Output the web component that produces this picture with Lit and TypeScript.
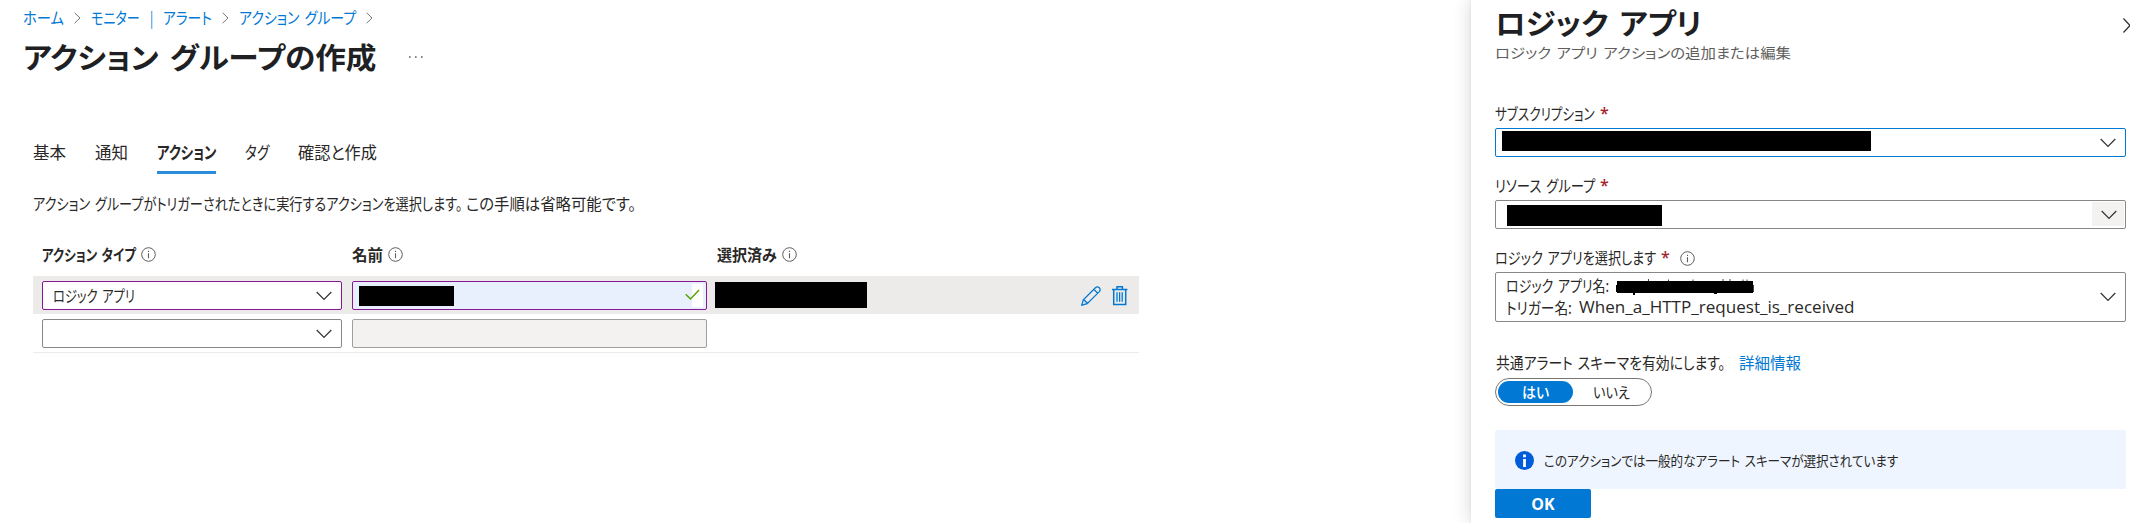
import { LitElement, html, css, svg } from "lit";
import { customElement, property, query } from "lit/decorators.js";

/** A single line of text condensed or widened to a given width. */
@customElement("fit-text")
class FitText extends LitElement {
  static styles = css`
    :host { display: inline-block; white-space: nowrap; flex: none; }
    .run { display: inline-block; transform-origin: 0 50%; font-feature-settings: "palt"; word-spacing: 0.14em; }
  `;
  @property() text = "";
  @property({ type: Number }) w = 0;
  @query(".run") run!: HTMLElement;
  render() {
    return html`<span class="run">${this.text}</span>`;
  }
  updated() {
    this.style.width = `${this.w}px`;
    const natural = this.run.offsetWidth;
    if (natural) this.run.style.transform = `scaleX(${this.w / natural})`;
  }
}

const t = (text: string, w: number) => html`<fit-text .text=${text} .w=${w}></fit-text>`;

const sep = html`<svg class="sep" width="7" height="12" viewBox="0 0 7 12"><path d="M.6.8 6 6 .6 11.2" fill="none" stroke="#797775" /></svg>`;
const chevron = html`<svg class="chev" width="16" height="10" viewBox="0 0 16 10"><path d="M.7 1 8 8.3 15.3 1" fill="none" stroke="#323130" stroke-width="1.2" /></svg>`;
const info = html`<svg class="info" width="15" height="15" viewBox="0 0 15 15"><circle cx="7.5" cy="7.5" r="6.8" fill="none" stroke="#605e5c" /><path d="M7.5 6.3v5M7.5 3.7v1.3" stroke="#605e5c" stroke-width="1.1" /></svg>`;
const bars = [0, 1, 2].map((i) => svg`<path d=${`M${5 + i * 2.6} 6.2v9.6`} stroke-width="1.3" />`);

@customElement("app-root")
class AppRoot extends LitElement {
  static styles = css`
    :host {
      display: block; width: 2130px; height: 523px; overflow: hidden; background: #fff; color: #292827;
      font-family: "Noto Sans CJK JP", "Open Sans", sans-serif; font-size: 16px;
    }
    * { box-sizing: border-box; }
    svg { display: block; flex: none; }
    .page { display: grid; grid-template-columns: 1471px 659px; height: 523px; }
    .crumbs { display: flex; align-items: center; height: 36px; padding-left: 23px; gap: 10px; color: #0078d4; line-height: 34px; }
    .crumbs fit-text { height: 36px; }
    .title { display: flex; align-items: center; height: 42px; padding-left: 23px; gap: 33px; font-size: 29px; font-weight: 700; line-height: 40px; color: #201f24; }
    .title fit-text { height: 42px; }
    .tabs { display: flex; gap: 29px; margin: 52px 0 0 33px; height: 44px; font-size: 17px; }
    .tab { padding-top: 2px; line-height: 40px; border-bottom: 3px solid transparent; }
    .tab.on { font-weight: 700; border-color: #2b8cdb; }
    .desc { display: flex; gap: 4px; margin: 15px 0 0 33px; height: 30px; line-height: 28px; }
    .table { margin: 17px 0 0 33px; width: 1106px; }
    .head, .row { display: grid; grid-template-columns: 300px 355px 1fr auto; column-gap: 10px; padding-left: 9px; }
    .head { height: 40px; font-weight: 700; font-size: 15.5px; line-height: 36px; }
    .head div { display: flex; gap: 5px; height: 36px; align-items: center; }
    .row { height: 38px; padding-top: 5px; }
    .row.sel { background: #edebe9; }
    .row.last { height: 39px; border-bottom: 1px solid #edebe9; }
    .box { display: flex; align-items: center; height: 29px; border: 1px solid #8a8886; border-radius: 2px; background: #fff; }
    .box .chev { margin-left: auto; margin-right: 9px; }
    .box.edited { border-color: #881798; }
    .pick { padding-left: 10px; line-height: 27px; }
    .name { padding: 2px 3px 2px 6px; background: #e8f0fe; justify-content: space-between; }
    .off { background: #f3f2f1; border-color: #a19f9d; }
    .black { background: #000; flex: none; }
    .b1 { width: 95px; height: 20px; margin-top: 1px; }
    .b2 { width: 152px; height: 26px; margin: 1px 0 0 -2px; }
    .b3 { width: 369px; height: 20px; margin: -3px 0 0 6px; }
    .b4 { width: 155px; height: 21px; margin: 2px 0 0 11px; }
    .valid { width: 18px; height: 23px; background: linear-gradient(90deg, transparent 7px, #fff 7px); }
    .acts { display: flex; gap: 11px; padding: 5px 11px 0 0; }
    .panel { position: relative; padding-left: 24px; background: #fff; box-shadow: 0 0 18px rgba(0,0,0,.16), 0 0 3px rgba(0,0,0,.08); }
    .ptitle { height: 43px; line-height: 44px; font-size: 29px; font-weight: 700; color: #201f24; }
    .sub { height: 20px; line-height: 18px; font-size: 14px; color: #605e5c; }
    .close { position: absolute; left: 652px; top: 18px; }
    .field { width: 631px; margin-top: 17px; }
    .field.first { margin-top: 39px; }
    .label { display: flex; height: 26px; line-height: 22px; gap: 5px; }
    .star { width: 8px; color: #a4262c; font-family: "Open Sans", sans-serif; font-size: 16px; font-weight: 600; }
    .label .info { margin: 5px 0 0 6px; }
    .focus { border-color: #0078d4; }
    .drop { display: flex; align-items: center; margin: -1px 1px 0 auto; width: 32px; height: 24px; background: #f3f2f1; }
    .box .drop .chev { margin: 1px 7px 0 auto; }
    .tall { height: 50px; padding-left: 10px; }
    .lines { line-height: 22px; margin-top: -2px; }
    .line { display: flex; height: 22px; gap: 7px; }
    .line svg { margin-top: 1px; }
    .latin { font-family: "Open Sans", sans-serif; font-size: 16px; }
    .schema { display: flex; gap: 14px; margin-top: 29px; height: 27px; line-height: 22px; padding-left: 1px; }
    .link { color: #0078d4; }
    .toggle { display: flex; width: 157px; height: 28px; padding: 2px; border: 1px solid #797775; border-radius: 14px; font-size: 15px; line-height: 21px; }
    .yes { width: 75px; height: 22px; border-radius: 11px; background: #0078d4; color: #fff; font-weight: 500; text-align: center; }
    .no { padding-left: 20px; }
    .banner { display: flex; align-items: center; gap: 10px; width: 631px; height: 59px; margin-top: 24px; padding: 1px 0 0 20px; background: #eff5ff; border-radius: 2px; font-size: 14px; }
    .ok { display: block; width: 96px; height: 29px; padding: 0; border: 0; border-radius: 2px; background: #0078d4; color: #fff; font: 700 16px/28px "Open Sans", sans-serif; text-align: center; }
  `;

  render() {
    return html`<div class="page">
      <main>
        <nav class="crumbs">${t("ホーム", 41)}${sep}${t("モニター", 49)}${t("|", 3)}${t("アラート", 49)}${sep}${t("アクション グループ", 117)}${sep}</nav>
        <div class="title">${t("アクション グループの作成", 353)}<svg width="14" height="4" viewBox="0 0 14 4"><path d="M0 2h1.6M6 2h1.6M12 2h1.6" stroke="#605e5c" stroke-width="1.6" /></svg></div>
        <div class="tabs">
          <div class="tab">${t("基本", 33)}</div><div class="tab">${t("通知", 33)}</div>
          <div class="tab on">${t("アクション", 59)}</div><div class="tab">${t("タグ", 24)}</div>
          <div class="tab">${t("確認と作成", 79)}</div>
        </div>
        <div class="desc">${t("アクション グループがトリガーされたときに実行するアクションを選択します。", 429)}${t("この手順は省略可能です。", 170)}</div>
        <div class="table">
          <div class="head">
            <div>${t("アクション タイプ", 94)}${info}</div><div>${t("名前", 31)}${info}</div><div>${t("選択済み", 60)}${info}</div>
          </div>
          <div class="row sel">
            <div class="box pick edited">${t("ロジック アプリ", 82)}${chevron}</div>
            <div class="box name edited"><span class="black b1"></span><span class="valid"><svg width="18" height="23" viewBox="0 0 18 23"><path d="M.7 10.2 5.5 15 14 6" fill="none" stroke="#57a300" stroke-width="1.5" /></svg></span></div>
            <span class="black b2"></span>
            <div class="acts">
              <svg width="20" height="20" viewBox="0 0 20 20" fill="none" stroke="#0078d4" stroke-width="1.25"><path d="M.8 19.2 2.3 13.8 14.4 1.7Q16.3 0 18.3 1.7 20 3.7 18.3 5.6L6.2 17.7ZM12.8 3.3 16.7 7.2M2.3 13.8Q4.2 13.7 4.3 15.7 6.3 15.8 6.2 17.7" /></svg>
              <svg width="16" height="20" viewBox="0 0 16 20" fill="none" stroke="#0078d4" stroke-width="1.5"><path d="M0 3.5h15.4M1.7 3.5v15h12v-15M5 3.3v-2.5h5.4v2.5" />${bars}</svg>
            </div>
          </div>
          <div class="row last"><div class="box pick">${chevron}</div><div class="box off"></div></div>
        </div>
      </main>
      <aside class="panel">
        <div class="ptitle">${t("ロジック アプリ", 207)}</div>
        <div class="sub">${t("ロジック アプリ アクションの追加または編集", 296)}</div>
        <svg class="close" width="14" height="15" viewBox="0 0 14 15"><path d="M.4.5 13.6 14.5M13.6.5.4 14.5" stroke="#323130" stroke-width="1.3" /></svg>
        <div class="field first">
          <div class="label">${t("サブスクリプション", 100)}<span class="star">*</span></div>
          <div class="box focus"><span class="black b3"></span>${chevron}</div>
        </div>
        <div class="field">
          <div class="label">${t("リソース グループ", 100)}<span class="star">*</span></div>
          <div class="box"><span class="black b4"></span><span class="drop">${chevron}</span></div>
        </div>
        <div class="field">
          <div class="label">${t("ロジック アプリを選択します", 161)}<span class="star">*</span>${info}</div>
          <div class="box tall">
            <div class="lines">
              <div class="line">${t("ロジック アプリ名:", 103)}<svg width="138" height="20" viewBox="0 0 138 20"><path d="M1 6h136v12H1zM0 10h1v7H0zM17 18h2v2h-2zM98 18h3v1h-3z" /><path d="M32.5 4v2M52.5 4.500v1.500M77 4.500v1.500M107 4v2M114 4v2M127 4.500v1.500M131 4.500v1.500M137.500 10v7" stroke="#444" fill="none" /></svg></div>
              <div class="line">${t("トリガー名:", 66)}<span class="latin">${t("When_a_HTTP_request_is_received", 275)}</span></div>
            </div>${chevron}
          </div>
        </div>
        <div class="schema">${t("共通アラート スキーマを有効にします。", 229)}<span class="link">${t("詳細情報", 62)}</span></div>
        <div class="toggle"><span class="yes">${t("はい", 27)}</span><span class="no">${t("いいえ", 37)}</span></div>
        <div class="banner"><svg width="19" height="19" viewBox="0 0 19 19"><circle cx="9.500" cy="9.500" r="9.500" fill="#015cda" /><path d="M9.500 8v8M9.500 3.400v2.800" stroke="#fff" stroke-width="2.800" /></svg>${t("このアクションでは一般的なアラート スキーマが選択されています", 354)}</div>
        <button class="ok">OK</button>
      </aside>
    </div>`;
  }
}
